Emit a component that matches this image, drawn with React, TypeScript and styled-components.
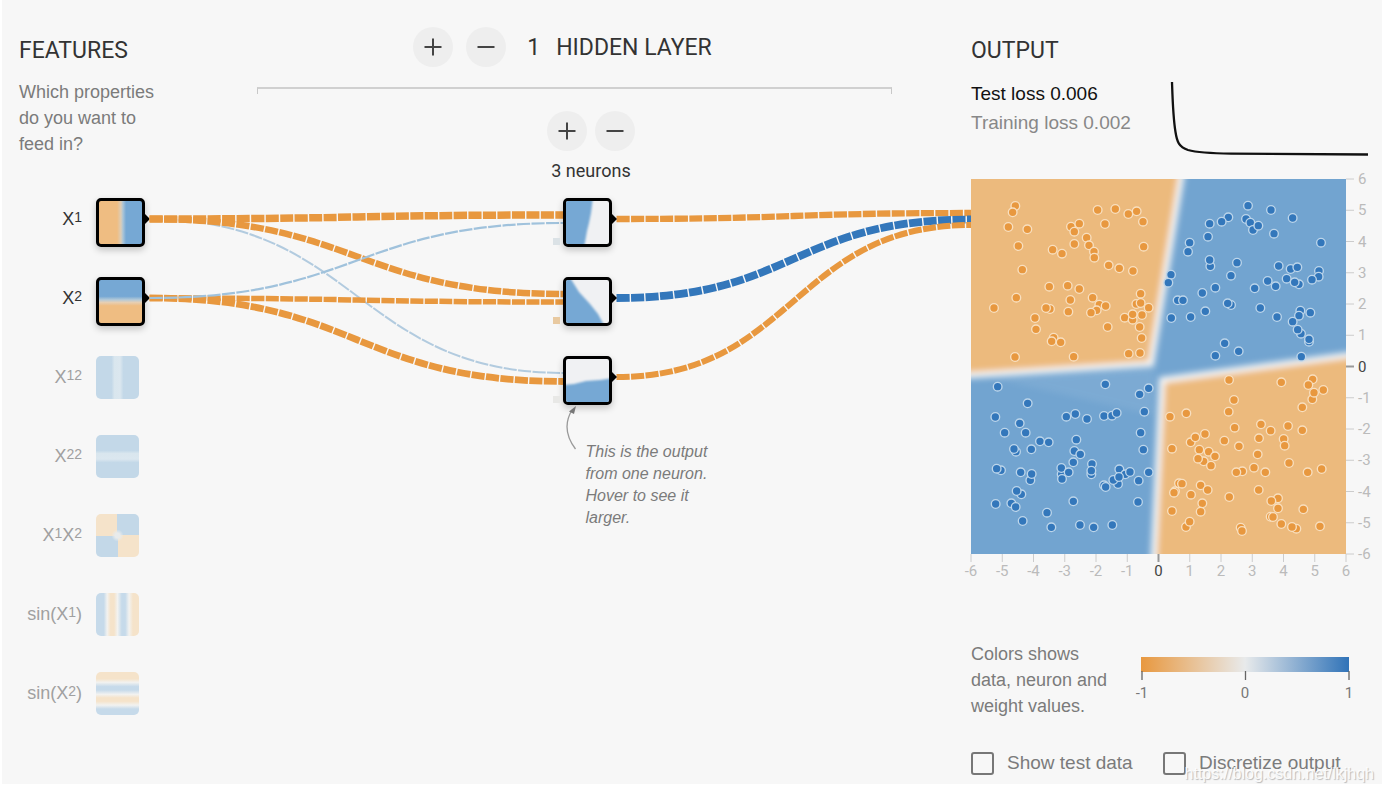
import React, { useLayoutEffect, useRef, useState } from 'react';
import styled, { createGlobalStyle, css } from 'styled-components';

const SANS = '"Liberation Sans", Arial, sans-serif';
const ROBOTO = 'Roboto, "Liberation Sans", sans-serif';
const ORANGE = '#e8983f';
const BLUE = '#3377bb';
const ROW = 79;

const GlobalStyle = createGlobalStyle`
  *, *::before, *::after { box-sizing: border-box; }
  body { margin: 0; background: #fff; font-family: ${SANS}; font-size: 19px; color: #7b7b7b; }
  h2, p { margin: 0; font-weight: 400; }
`;

const Main = styled.main`
  position: relative;
  display: grid;
  grid-template-columns: 148px minmax(560px, 1fr) 411px;
  margin-left: 2px;
  padding-bottom: 8px;
  background: #f7f7f7;
`;

const Title = styled.h2`
  font: 400 23px/28px ${ROBOTO};
  color: #333;
  white-space: nowrap;
`;

/* ---------- features ---------- */

const FeatureColumn = styled.section`
  padding-top: 37px;
`;

const FeatureHead = styled.div`
  display: flex;
  flex-direction: column;
  gap: 14px;
  margin: 0 -20px 41px 17px;
`;

const Hint = styled.p`
  font-size: 18px;
  line-height: 26px;
`;

const FeatureRow = styled.div`
  display: grid;
  grid-template-columns: 80px auto;
  justify-content: start;
  column-gap: 14px;
  align-items: start;
  height: ${ROW}px;
`;

const FeatureLabel = styled.span<{ $on?: boolean }>`
  font-size: 18px;
  line-height: 42px;
  text-align: right;
  color: ${(p) => (p.$on ? '#333' : '#a0a0a0')};

  sup {
    font-size: 14px;
    line-height: 1;
    vertical-align: 3px;
  }
`;

const nodeBox = css`
  position: relative;
  width: 49px;
  height: 49px;
  padding: 0;
  border: 3px solid #000;
  border-radius: 5px;
  box-shadow: 0 3px 7px rgba(0, 0, 0, 0.22);

  &::after {
    content: '';
    position: absolute;
    left: 45px;
    top: 12px;
    border: 6px solid transparent;
    border-right-width: 0;
    border-left-color: #000;
  }
`;

const Tile = styled.button<{ $on?: boolean; $fill: string }>`
  display: block;
  width: 43px;
  height: 43px;
  padding: 0;
  border: 0;
  border-radius: 5px;
  ${(p) => p.$on && nodeBox}
  background: ${(p) => p.$fill};
  background-origin: padding-box;
`;

/* ---------- network ---------- */

const Network = styled.section`
  padding-top: 27px;
`;

const LayerBar = styled.div`
  display: flex;
  justify-content: center;
  align-items: center;
  gap: 13px;
  padding-left: 4px;
`;

const LayerCount = styled(Title)`
  display: flex;
  gap: 16px;
  margin-left: 8px;
  padding-top: 2px;
`;

const RoundButton = styled.button`
  display: grid;
  place-items: center;
  width: 40px;
  height: 40px;
  padding: 0;
  border: 0;
  border-radius: 50%;
  background: #eee;
  color: #444;
`;

const Bracket = styled.div`
  height: 7px;
  margin: 20px 79px 17px 107px;
  border: 1px solid #c8c8c8;
  border-top: 2px solid #d0d0d0;
  border-bottom: 0;
`;

const NeuronBar = styled.div`
  display: flex;
  flex-direction: column;
  align-items: center;
  gap: 10px;
  padding-left: 61px;
  margin-bottom: 17px;
`;

const ButtonPair = styled.div`
  display: flex;
  gap: 8px;
`;

const NeuronCount = styled.div`
  font: 400 18px/20px ${ROBOTO};
  color: #333;
`;

const Stage = styled.div`
  position: relative;
`;

const EdgeLayer = styled.svg`
  position: absolute;
  inset: 0;
  width: 100%;
  height: 100%;
  overflow: visible;
  fill: none;
`;

const NeuronStack = styled.div`
  display: flex;
  flex-direction: column;
  align-items: center;
  padding-left: 54px;
`;

const NeuronCell = styled.div`
  position: relative;
  height: ${ROW}px;
`;

const Neuron = styled.button`
  ${nodeBox}
  display: block;
  background: #f0f1f3;

  svg { display: block; width: 43px; height: 43px; border-radius: 2px; }
`;

const Bias = styled.span<{ $color: string }>`
  position: absolute;
  left: -10px;
  top: 40px;
  width: 7px;
  height: 7px;
  background: ${(p) => p.$color};
`;

const Callout = styled.p`
  position: relative;
  width: 130px;
  margin: 6px 0 0 calc(50% + 25px);
  font-size: 16px;
  font-style: italic;
  line-height: 22px;
`;

const CalloutArrow = styled.svg`
  position: absolute;
  left: -25px;
  top: -36px;
`;

/* ---------- output ---------- */

const Output = styled.section`
  padding-top: 37px;
`;

const LossRow = styled.div`
  display: grid;
  grid-template-columns: 190px 1fr;
  margin: 14px 0 20px;
  line-height: 29px;
`;

const Loss = styled.div<{ $strong?: boolean }>`
  color: ${(p) => (p.$strong ? '#111' : '#888')};
  white-space: nowrap;
`;

const Plot = styled.svg`
  display: block;
  margin-bottom: 57px;
  overflow: visible;
  font-family: ${ROBOTO};
  font-size: 15px;
`;

const LegendRow = styled.div`
  display: grid;
  grid-template-columns: 160px 1fr;
  margin-bottom: 31px;
`;

const Scale = styled.svg`
  margin-top: 16px;
  overflow: visible;
  font-family: ${ROBOTO};
  font-size: 15px;
`;

const Options = styled.div`
  display: grid;
  grid-template-columns: 192px auto;
`;

const Option = styled.label`
  display: flex;
  align-items: center;
  gap: 13px;
  height: 26px;
  white-space: nowrap;
`;

const Checkbox = styled.input`
  appearance: none;
  width: 23px;
  height: 23px;
  margin: 0;
  border: 2px solid #777;
  border-radius: 3px;
`;

const Watermark = styled.span`
  position: absolute;
  right: 8px;
  bottom: 0;
  font-size: 16px;
  line-height: 20px;
  color: rgba(255, 255, 255, 0.9);
  text-shadow: 1px 1px 1px rgba(0, 0, 0, 0.25);
  pointer-events: none;
`;

const Sup = ({ children }: { children: React.ReactNode }) => <sup>{children}</sup>;

const LO = '#f5e3ca';
const LB = '#c6daea';
const LW = '#f2f2f0';

const FEATURES = [
  { id: 'x1', on: true, label: <>X<Sup>1</Sup></>, fill: 'linear-gradient(90deg, #efbd82 42%, #dccdb8 51%, #a9c4d8 56%, #76a8d4 63%)' },
  { id: 'x2', on: true, label: <>X<Sup>2</Sup></>, fill: 'linear-gradient(180deg, #76a8d4 38%, #b4cad8 46%, #e6cfb4 52%, #efbd82 60%)' },
  { id: 'x1-squared', label: <>X<Sup>12</Sup></>, fill: 'linear-gradient(90deg, #c3d8e8 36%, #d9e6ee 43%, #dbe7ef 56%, #c3d8e8 64%)' },
  { id: 'x2-squared', label: <>X<Sup>22</Sup></>, fill: 'linear-gradient(180deg, #c3d8e8 36%, #d9e6ee 43%, #dbe7ef 56%, #c3d8e8 64%)' },
  { id: 'x1x2', label: <>X<Sup>1</Sup>X<Sup>2</Sup></>, fill: `radial-gradient(circle, #e8ebec 8%, rgba(232,235,236,0) 20%), conic-gradient(#c3d8e8 25%, ${LO} 25% 50%, #c3d8e8 50% 75%, ${LO} 75%)` },
  { id: 'sin-x1', label: <>sin(X<Sup>1</Sup>)</>, fill: `linear-gradient(90deg, ${LB} 0%, ${LB} 18%, ${LW} 26%, ${LO} 34%, ${LO} 42%, ${LW} 50%, ${LB} 60%, ${LB} 68%, ${LW} 77%, ${LO} 86%)` },
  { id: 'sin-x2', label: <>sin(X<Sup>2</Sup>)</>, fill: `linear-gradient(180deg, ${LO} 0%, ${LO} 16%, ${LW} 24%, ${LB} 34%, ${LB} 42%, ${LW} 52%, ${LO} 60%, ${LO} 68%, ${LW} 77%, ${LB} 86%)` },
];

const NEURONS = [
  { shape: '-4,-4 27,-4 25,12 23,22 21,30 18,47 -4,47', bias: '#dbe2e6' },
  { shape: '-4,-4 3,-4 13,12 24,24 32,34 39,47 -4,47', bias: '#e8c9a0' },
  { shape: '-4,26 8,25 20,22 34,21 47,19 47,47 -4,47', bias: '#e8e8e6' },
];

type Edge = { from: number; to: number; width: number; color: string };

/* y positions are measured from the top of the first node */
const INPUT_EDGES: Edge[] = [
  { from: 21, to: 175, width: 2, color: '#b2cbdf' },
  { from: 21, to: 17, width: 7.5, color: ORANGE },
  { from: 21, to: 96, width: 6.5, color: ORANGE },
  { from: 100, to: 104, width: 5.5, color: ORANGE },
  { from: 100, to: 183.5, width: 6.8, color: ORANGE },
  { from: 100, to: 25, width: 2.2, color: '#a0c2dc' },
];
const OUTPUT_EDGES: Edge[] = [
  { from: 21, to: 15, width: 6.3, color: ORANGE },
  { from: 100, to: 21.5, width: 7.8, color: BLUE },
  { from: 179, to: 27, width: 6, color: ORANGE },
];

const curve = (x0: number, y0: number, x1: number, y1: number) => {
  const mid = (x0 + x1) / 2;
  return `M${x0} ${y0}C${mid} ${y0} ${mid} ${y1} ${x1} ${y1}`;
};

function Edges() {
  const ref = useRef<SVGSVGElement>(null);
  const [width, setWidth] = useState(821);
  useLayoutEffect(() => {
    const el = ref.current;
    if (!el) return;
    const measure = () => setWidth(el.getBoundingClientRect().width);
    measure();
    const observer = new ResizeObserver(measure);
    observer.observe(el);
    return () => observer.disconnect();
  }, []);
  const center = width / 2 + 27;
  const draw = (edge: Edge, x0: number, x1: number, key: string) => (
    <path key={key} d={curve(x0, edge.from, x1, edge.to)} stroke={edge.color} strokeWidth={edge.width} strokeDasharray="13.1 1.4" />
  );
  return (
    <EdgeLayer ref={ref} aria-hidden="true">
      {INPUT_EDGES.map((e, i) => draw(e, -0.5, center - 23, `in${i}`))}
      {OUTPUT_EDGES.map((e, i) => draw(e, center + 29, width, `out${i}`))}
    </EdgeLayer>
  );
}

const Plus = () => (
  <svg width="18" height="18" viewBox="0 0 18 18" stroke="currentColor" strokeWidth="2"><path d="M9 0.5v17M0.5 9h17" /></svg>
);
const Minus = () => (
  <svg width="18" height="18" viewBox="0 0 18 18" stroke="currentColor" strokeWidth="2"><path d="M0.5 9h17" /></svg>
);

/* Sample points of each quadrant, in thirds of a pixel from the quadrant's origin */
const SAMPLES = [
  { color: ORANGE, ring: '#f8dfbf', x: -11, y: -9, points: '166,108 158,127 145,171 202,178 175,228 187,299 278,239 306,251 333,170 358,161 343,185 343,222 380,203 387,226 402,245 403,263 413,120 466,117 435,162 505,132 530,124 549,155 551,230 446,286 478,295 519,303 102,414 169,383 268,350 323,347 358,357 331,390 325,425 270,417 258,414 225,444 228,478 281,503 275,514 302,517 165,561 341,560 398,383 418,404 437,408 410,421 393,428 443,471 494,443 518,449 518,433 529,402 542,399 542,371 566,413 546,435 539,471 545,504 506,551 540,549' },
  { color: BLUE, ring: '#bcd5ea', x: 179, y: -9, points: '294,107 363,120 428,144 288,147 301,158 309,180 325,167 372,191 513,218 235,142 215,155 179,161 174,200 119,218 114,245 181,289 179,270 261,278 63,314 55,338 243,317 386,288 422,297 442,292 507,303 506,320 486,329 410,326 447,343 434,337 353,333 377,349 314,355 196,353 157,369 83,391 99,391 243,405 233,400 331,414 166,424 122,441 64,444 381,441 451,422 447,437 481,428 428,455 453,491 443,479 477,515 477,508 224,520 266,544 196,557 454,560' },
  { color: BLUE, ring: '#bcd5ea', x: -11, y: 181, points: '113,80 436,73 566,85 539,103 203,130 553,155 106,171 319,170 346,162 381,177 432,168 456,167 470,159 179,190 134,218 197,218 542,218 240,244 266,247 349,239 168,275 162,267 214,268 343,273 361,283 550,269 340,307 123,331 110,326 182,337 211,361 215,342 305,343 304,324 326,337 306,357 396,312 394,343 394,332 478,328 496,343 510,336 474,372 460,360 477,351 566,337 536,362 432,376 437,381 184,403 170,393 154,430 167,441 107,432 340,424 534,426 261,458 188,483 274,502 360,495 401,502 457,495' },
  { color: ORANGE, ring: '#f8dfbf', x: 179, y: 181, points: '237,60 394,67 488,58 475,75 520,90 487,118 492,98 457,142 252,120 236,155 109,160 60,170 254,203 333,193 362,212 414,198 457,211 165,222 122,247 136,232 223,242 327,235 401,237 404,257 66,266 267,259 148,269 176,275 195,289 323,283 161,304 144,296 183,317 417,309 312,323 346,337 277,334 259,337 473,337 515,327 87,370 96,371 75,394 72,398 152,376 173,390 123,404 326,390 238,411 384,415 364,423 157,430 384,445 460,448 66,453 152,455 108,501 119,485 272,503 276,513 362,470 369,471 394,492 439,506 426,501 510,499' },
];

const TICKS = Array.from({ length: 13 }, (_, i) => i - 6);

function OutputPlot() {
  return (
    <Plot width="411" height="405" viewBox="0 0 411 405" role="img" aria-label="Output heat map">
      <defs>
        <clipPath id="plot-area"><rect width="375" height="375" /></clipPath>
        <filter id="soften" x="-10%" y="-10%" width="120%" height="120%"><feGaussianBlur stdDeviation="3" /></filter>
      </defs>
      <g clipPath="url(#plot-area)">
        <rect width="375" height="375" fill="#72a4d0" />
        <path d="M20 199L184 188L182 236Z" fill="#fff" opacity="0.07" filter="url(#soften)" />
        <g filter="url(#soften)" fill="#ecba7d" stroke="#f6f6f6" strokeWidth="6">
          <path d="M-60 200L180 185L210 0L217 -40H-60Z" />
          <path d="M430 169L191 201L183 375L181 420H430Z" />
        </g>
      </g>
      {SAMPLES.map((set, i) => (
        <g key={i} transform={`translate(${set.x} ${set.y}) scale(0.33333)`} fill={set.color} stroke={set.ring} strokeWidth="4">
          {set.points.split(' ').map((p, j) => {
            const [cx, cy] = p.split(',');
            return <circle key={j} cx={cx} cy={cy} r="13" />;
          })}
        </g>
      ))}
      {TICKS.map((t) => {
        const at = (t + 6) * 31.25;
        const zero = t === 0;
        return (
          <g key={t} fill={zero ? '#444' : '#bbb'} stroke="none">
            <path d={`M${at} 375v8M375 ${375 - at}h8`} stroke={zero ? '#999' : '#ccc'} strokeWidth={zero ? 2 : 1} />
            <text x={at} y="397" textAnchor="middle">{t}</text>
            <text x="387" y={380 - at}>{t}</text>
          </g>
        );
      })}
    </Plot>
  );
}

function ColorScale() {
  return (
    <Scale width="250" height="48" viewBox="0 0 250 48" role="img" aria-label="Color scale from -1 to 1">
      <defs>
        <linearGradient id="scale">
          <stop offset="0" stopColor={ORANGE} />
          <stop offset="0.5" stopColor="#e8eaeb" />
          <stop offset="1" stopColor="#3073b8" />
        </linearGradient>
      </defs>
      <rect x="10" width="208" height="15" fill="url(#scale)" />
      <path d="M11 14v9M114.500 14v9M218 14v9" stroke="#666" strokeWidth="1.300" />
      <g fill="#777" textAnchor="middle">
        <text x="11" y="41">-1</text>
        <text x="114" y="41">0</text>
        <text x="218" y="41">1</text>
      </g>
    </Scale>
  );
}

export default function App() {
  return (
    <>
      <GlobalStyle />
      <Main>
        <FeatureColumn>
          <FeatureHead>
            <Title>FEATURES</Title>
            <Hint>Which properties<br />do you want to<br />feed in?</Hint>
          </FeatureHead>
          {FEATURES.map((f) => (
            <FeatureRow key={f.id}>
              <FeatureLabel id={f.id} $on={f.on}>{f.label}</FeatureLabel>
              <Tile type="button" aria-labelledby={f.id} aria-pressed={!!f.on} $on={f.on} $fill={f.fill} />
            </FeatureRow>
          ))}
        </FeatureColumn>

        <Network>
          <LayerBar>
            <RoundButton type="button" aria-label="Add layer"><Plus /></RoundButton>
            <RoundButton type="button" aria-label="Remove layer"><Minus /></RoundButton>
            <LayerCount><span>1</span><span>HIDDEN LAYER</span></LayerCount>
          </LayerBar>
          <Bracket />
          <NeuronBar>
            <ButtonPair>
              <RoundButton type="button" aria-label="Add neuron"><Plus /></RoundButton>
              <RoundButton type="button" aria-label="Remove neuron"><Minus /></RoundButton>
            </ButtonPair>
            <NeuronCount>3 neurons</NeuronCount>
          </NeuronBar>
          <Stage>
            <Edges />
            <NeuronStack>
              {NEURONS.map((n, i) => (
                <NeuronCell key={i}>
                  <Neuron type="button" aria-label={`Neuron ${i + 1}`}>
                    <svg viewBox="0 0 43 43">
                      <defs><filter id={`edge${i}`}><feGaussianBlur stdDeviation="0.8" /></filter></defs>
                      <polygon points={n.shape} fill="#76a8d4" filter={`url(#edge${i})`} />
                    </svg>
                  </Neuron>
                  <Bias $color={n.bias} />
                </NeuronCell>
              ))}
            </NeuronStack>
            <Callout>
              <CalloutArrow width="20" height="46" viewBox="0 0 20 46" aria-hidden="true">
                <path d="M14.500 44Q-0.500 24 11 5" fill="none" stroke="#999" strokeWidth="1.300" />
                <path d="M15 1L8 6.500L13 9Z" fill="#777" />
              </CalloutArrow>
              This is the output from one neuron. Hover to see it larger.
            </Callout>
          </Stage>
        </Network>

        <Output>
          <Title>OUTPUT</Title>
          <LossRow>
            <div>
              <Loss $strong>Test loss 0.006</Loss>
              <Loss>Training loss 0.002</Loss>
            </div>
            <svg width="210" height="80" viewBox="0 0 210 80" fill="none" stroke="#111" strokeWidth="2.300" role="img" aria-label="Loss over time">
              <path d="M11 3C11.500 18 12 38 14.500 53C16 63 18 68 27 71C38 74 50 74.300 70 74.600C110 75 150 75.300 207 75.500" />
            </svg>
          </LossRow>
          <OutputPlot />
          <LegendRow>
            <Hint>Colors shows<br />data, neuron and<br />weight values.</Hint>
            <ColorScale />
          </LegendRow>
          <Options>
            <Option><Checkbox type="checkbox" />Show test data</Option>
            <Option><Checkbox type="checkbox" />Discretize output</Option>
          </Options>
        </Output>
        <Watermark>https://blog.csdn.net/lkjhqh</Watermark>
      </Main>
    </>
  );
}
